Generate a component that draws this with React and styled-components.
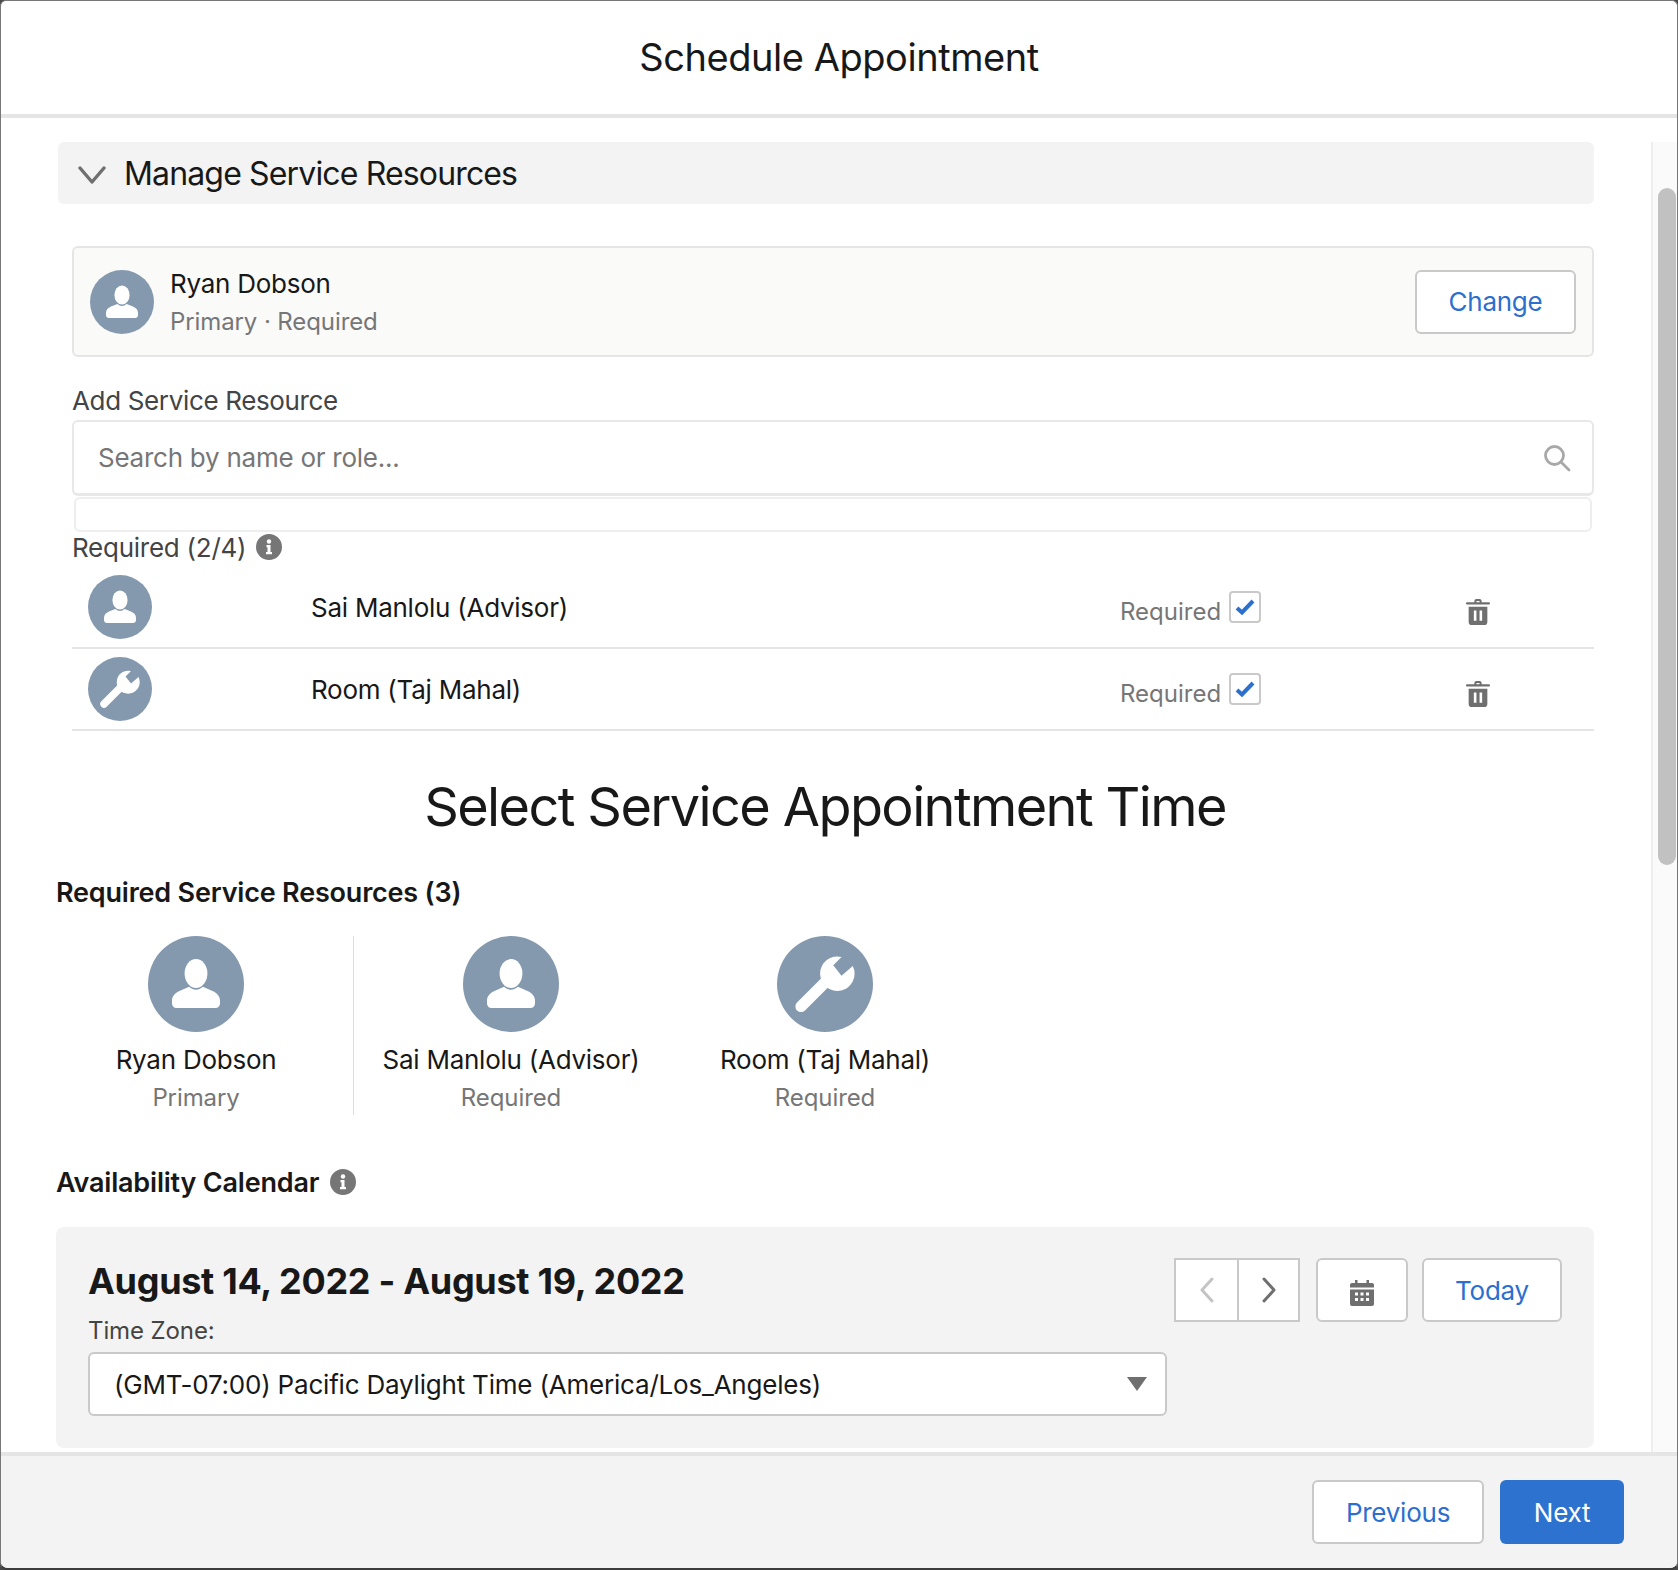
import React from 'react';
import styled, { createGlobalStyle } from 'styled-components';

const GlobalStyle = createGlobalStyle`
  html, body {
    margin: 0;
    padding: 0;
    background: #4a4a4a;
  }
  * {
    box-sizing: border-box;
  }
`;

const Window = styled.div`
  display: flex;
  flex-direction: column;
  height: 1570px;
  overflow: hidden;
  background: #fff;
  border: 1px solid #777;
  border-bottom: 2px solid #3c3c3c;
  border-radius: 6px 6px 8px 8px;
  font-family: Inter, "Liberation Sans", sans-serif;
  color: #181818;
`;

const Header = styled.header`
  flex: none;
  height: 117px;
  padding-bottom: 2px;
  display: flex;
  align-items: center;
  justify-content: center;
  border-bottom: 4px solid #e5e5e5;
  font-size: 38px;
  letter-spacing: -0.45px;
`;

const Body = styled.div`
  flex: 1;
  min-height: 0;
  display: flex;
  padding-top: 24px;
`;

const Content = styled.main`
  flex: none;
  width: 1650px;
  padding: 0 57px 0 55px;
  overflow: hidden;
`;

const Track = styled.div`
  flex: 1;
  position: relative;
  background: #fafafa;
  border-left: 2px solid #eeeeee;
`;

const Thumb = styled.div`
  position: absolute;
  top: 46px;
  left: 5px;
  width: 18px;
  height: 677px;
  border-radius: 9px;
  background: #c1c1c1;
`;

const SectionBar = styled.div`
  height: 62px;
  margin-left: 2px;
  padding-left: 20px;
  display: flex;
  align-items: center;
  gap: 18px;
  background: #f3f3f3;
  border-radius: 6px;
  font-size: 32px;
  letter-spacing: -0.85px;
`;

const ChevronSlot = styled.span`
  display: flex;
  padding-top: 3px;
`;

const Indent = styled.div`
  margin-left: 16px;
`;

const PrimaryCard = styled.div`
  height: 111px;
  margin-top: 42px;
  padding: 0 16px 0 16px;
  display: flex;
  align-items: center;
  gap: 16px;
  background: #fafaf9;
  border: 2px solid #e5e5e5;
  border-radius: 6px;
`;

const PrimaryText = styled.div`
  flex: 1;
  padding-top: 2px;
`;

const Name = styled.div`
  font-size: 26px;
  line-height: 34px;
  letter-spacing: -0.25px;
`;

const Sub = styled.div`
  margin-top: 4px;
  font-size: 24px;
  line-height: 34px;
  letter-spacing: -0.1px;
  color: #767676;
`;

const Avatar = styled.span`
  flex: none;
  width: ${p => p.$size}px;
  height: ${p => p.$size}px;
  border-radius: 50%;
  background: #8599ae;
  display: flex;
  align-items: center;
  justify-content: center;
  color: #fff;
`;

const Button = styled.button`
  flex: none;
  width: ${p => p.$width}px;
  height: ${p => p.$height || 64}px;
  padding: 0;
  display: flex;
  align-items: center;
  justify-content: center;
  background: ${p => (p.$primary ? '#2d72cf' : '#fff')};
  border: ${p => (p.$primary ? 'none' : '2px solid #c9c9c9')};
  border-radius: 6px;
  font-family: inherit;
  font-size: 26px;
  letter-spacing: -0.25px;
  color: ${p => (p.$primary ? '#fff' : '#2b6fcf')};
`;

const FieldLabel = styled.div`
  margin-top: 29px;
  font-size: 26px;
  line-height: 30px;
  letter-spacing: -0.35px;
  color: #444;
`;

const SearchBox = styled.div`
  height: 76px;
  margin-top: 4px;
  padding: 0 21px 0 24px;
  display: flex;
  align-items: center;
  justify-content: space-between;
  background: #fff;
  border: 2px solid #e8e8e8;
  border-bottom-width: 3px;
  border-radius: 6px;
  font-size: 26px;
  letter-spacing: -0.25px;
  color: #767676;
`;

const EmptyList = styled.div`
  height: 35px;
  margin: 1px 2px 0;
  border: 2px solid #eeeeee;
  border-radius: 6px;
`;

const RequiredLabel = styled(FieldLabel)`
  margin: 1px 0 4px;
  display: flex;
  align-items: center;
  gap: 10px;
  letter-spacing: -0.25px;
`;

const InfoSlot = styled.span`
  display: flex;
  margin-top: -2px;
`;

const ResourceRow = styled.div`
  height: 82px;
  padding-left: 16px;
  display: grid;
  grid-template-columns: 223px 809px 346px 1fr;
  align-items: center;
  border-bottom: 2px solid #e5e5e5;
`;

const RowName = styled(Name)`
  padding-top: 1px;
`;

const RequiredCell = styled.div`
  display: flex;
  align-items: center;
  gap: 8px;
`;

const RequiredText = styled.span`
  padding-top: 9px;
  font-size: 24px;
  letter-spacing: 0;
  color: #767676;
`;

const Checkbox = styled.span`
  width: 32px;
  height: 32px;
  display: flex;
  align-items: center;
  justify-content: center;
  background: #fff;
  border: 2px solid #c9c9c9;
  border-radius: 4px;
`;

const TrashCell = styled.div`
  display: flex;
  padding-top: 8px;
`;

const BigHeading = styled.h1`
  margin: 43px 0 0;
  font-size: 54px;
  font-weight: 400;
  line-height: 66px;
  letter-spacing: -1.6px;
  text-align: center;
`;

const SectionTitle = styled.h2`
  margin: ${p => p.$top}px 0 0;
  display: flex;
  align-items: center;
  gap: 11px;
  font-size: 27px;
  font-weight: 600;
  line-height: 34px;
  letter-spacing: -0.2px;
`;

const TileRow = styled.div`
  margin-top: 26px;
  display: flex;
`;

const Tile = styled.div`
  width: 280px;
  display: flex;
  flex-direction: column;
  align-items: center;
  & + & {
    margin-left: 34px;
  }
`;

const TileName = styled(Name)`
  margin-top: 11px;
`;

const TileDivider = styled.div`
  width: 1px;
  margin: 0 17px;
  background: #dddddd;
`;

const CalendarPanel = styled.section`
  height: 221px;
  margin-top: 27px;
  padding: 32px;
  display: flex;
  justify-content: space-between;
  background: #f3f3f3;
  border-radius: 8px;
`;

const PanelLeft = styled.div`
  width: 1080px;
`;

const DateRange = styled.div`
  font-size: 36px;
  font-weight: 700;
  line-height: 44px;
  letter-spacing: -0.3px;
`;

const ZoneLabel = styled.div`
  margin-top: 13px;
  font-size: 24px;
  line-height: 30px;
  letter-spacing: -0.1px;
  color: #444;
`;

const ZoneSelect = styled.div`
  height: 64px;
  margin-top: 6px;
  padding: 0 18px 0 24px;
  display: flex;
  align-items: center;
  justify-content: space-between;
  background: #fff;
  border: 2px solid #c9c9c9;
  border-radius: 6px;
  font-size: 26px;
  letter-spacing: -0.2px;
`;

const Caret = styled.span`
  width: 0;
  height: 0;
  border-left: 10px solid transparent;
  border-right: 10px solid transparent;
  border-top: 14px solid #6f6f6f;
`;

const PanelTools = styled.div`
  margin: -1px 0 0 7px;
  display: flex;
  align-items: flex-start;
  gap: 14px;
`;

const Pager = styled.div`
  display: flex;
  margin-right: 2px;
  border: 2px solid #c9c9c9;
  background: #fff;
`;

const PagerButton = styled.span`
  width: 61px;
  height: 60px;
  display: flex;
  align-items: center;
  justify-content: center;
  & + & {
    border-left: 2px solid #c9c9c9;
  }
`;

const CalendarSlot = styled.span`
  display: flex;
  padding-top: 5px;
`;

const Footer = styled.footer`
  flex: none;
  height: 116px;
  padding: 24px 53px 0 0;
  display: flex;
  justify-content: flex-end;
  gap: 16px;
  background: #f3f3f3;
  border-top: 4px solid #e5e5e5;
`;

const PersonIcon = ({ size }) => (
  <svg width={size} height={size} viewBox="0 0 64 64" fill="#fff">
    <ellipse cx="32" cy="25" rx="7.6" ry="9.6" />
    <path d="M16 45v-2c0-3 2-5 5-6.4l6.4-2.7c1.5 1.3 3 2 4.600 2s3.100-.7 4.600-2l6.400 2.700c3 1.400 5 3.400 5 6.400v2c0 1.700-1.300 3-3 3H19c-1.700 0-3-1.300-3-3z" />
  </svg>
);

const WrenchIcon = ({ size }) => (
  <svg width={size} height={size} viewBox="0 0 64 64">
    <path d="M43 14l-5.500 5.500L43 26.500l7.500-6.500A11.500 11.500 0 1 1 43 14z" fill="#fff" />
    <path d="M16 47l18-18" stroke="#fff" strokeWidth="7.500" strokeLinecap="round" />
  </svg>
);

const PersonAvatar = ({ size }) => (
  <Avatar $size={size}><PersonIcon size={size} /></Avatar>
);

const WrenchAvatar = ({ size }) => (
  <Avatar $size={size}><WrenchIcon size={size} /></Avatar>
);

const InfoIcon = () => (
  <svg width="26" height="26" viewBox="0 0 26 26">
    <circle cx="13" cy="13" r="13" fill="#767676" />
    <circle cx="13" cy="7.500" r="2.200" fill="#fff" />
    <path d="M10.500 11h4v7h1.500v2.200H10v-2.200h1.500v-4.800h-1z" fill="#fff" />
  </svg>
);

const SectionChevron = () => (
  <svg width="28" height="18" viewBox="0 0 28 18" fill="none" stroke="#6f6f6f" strokeWidth="3.400" strokeLinecap="round" strokeLinejoin="round">
    <path d="M2 2l12 14L26 2" />
  </svg>
);

const SearchIcon = () => (
  <svg width="28" height="28" viewBox="0 0 28 28" fill="none" stroke="#a8a8a8" strokeWidth="2.800" strokeLinecap="round">
    <circle cx="11.500" cy="11.500" r="9" />
    <path d="M18 18l8 8" />
  </svg>
);

const CheckIcon = () => (
  <svg width="20" height="16" viewBox="0 0 20 16" fill="none" stroke="#2b6fcf" strokeWidth="4">
    <path d="M2 9l5 4.500L18 2" />
  </svg>
);

const TrashIcon = () => (
  <svg width="24" height="27" viewBox="0 0 23 26" fill="#6f6f6f">
    <path d="M8 4V3a2 2 0 0 1 2-2h3a2 2 0 0 1 2 2v1h7a1 1 0 0 1 0 2.200H1A1 1 0 0 1 1 4zm2 0h3V3h-3z" />
    <path d="M2.500 8.500h18V23a3 3 0 0 1-3 3h-12a3 3 0 0 1-3-3zM7.500 12v10h2.500V12zm5.500 0v10h2.500V12z" fillRule="evenodd" />
  </svg>
);

const PagerChevron = ({ dir, color }) => (
  <svg width="16" height="26" viewBox="0 0 16 26" fill="none" stroke={color} strokeWidth="3" strokeLinecap="round" strokeLinejoin="round">
    <path d={dir === 'left' ? 'M13 2L3 13l10 11' : 'M3 2l10 11L3 24'} />
  </svg>
);

const CalendarIcon = () => (
  <svg width="24" height="26" viewBox="0 0 24 26" fill="#6f6f6f">
    <path d="M5 0h2.500v3H16.500V0H19v3h3a2 2 0 0 1 2 2v2.500H0V5a2 2 0 0 1 2-2h3z" />
    <path fillRule="evenodd" d="M0 9.500h24V24a2 2 0 0 1-2 2H2a2 2 0 0 1-2-2zM5 12.500v3h3v-3zm5.500 0v3h3v-3zm5.500 0v3h3v-3zM5 18v3h3v-3zm5.500 0v3h3v-3zm5.500 0v3h3v-3z" />
  </svg>
);

const resources = [
  { name: 'Sai Manlolu (Advisor)', avatar: PersonAvatar },
  { name: 'Room (Taj Mahal)', avatar: WrenchAvatar },
];

const App = () => {
  return (
    <Window>
      <GlobalStyle />
      <Header>Schedule Appointment</Header>
      <Body>
        <Content>
          <SectionBar>
            <ChevronSlot><SectionChevron /></ChevronSlot>
            Manage Service Resources
          </SectionBar>
          <Indent>
            <PrimaryCard>
              <PersonAvatar size={64} />
              <PrimaryText>
                <Name>Ryan Dobson</Name>
                <Sub>Primary · Required</Sub>
              </PrimaryText>
              <Button $width={161} $height={64}>Change</Button>
            </PrimaryCard>
            <FieldLabel>Add Service Resource</FieldLabel>
            <SearchBox>
              Search by name or role...
              <SearchIcon />
            </SearchBox>
            <EmptyList />
            <RequiredLabel>Required (2/4) <InfoSlot><InfoIcon /></InfoSlot></RequiredLabel>
            {resources.map(({ name, avatar: RowAvatar }) => (
              <ResourceRow key={name}>
                <RowAvatar size={64} />
                <RowName>{name}</RowName>
                <RequiredCell>
                  <RequiredText>Required</RequiredText>
                  <Checkbox><CheckIcon /></Checkbox>
                </RequiredCell>
                <TrashCell><TrashIcon /></TrashCell>
              </ResourceRow>
            ))}
          </Indent>
          <BigHeading>Select Service Appointment Time</BigHeading>
          <SectionTitle $top={36}>Required Service Resources (3)</SectionTitle>
          <TileRow>
            <Tile>
              <PersonAvatar size={96} />
              <TileName>Ryan Dobson</TileName>
              <Sub>Primary</Sub>
            </Tile>
            <TileDivider />
            <Tile>
              <PersonAvatar size={96} />
              <TileName>Sai Manlolu (Advisor)</TileName>
              <Sub>Required</Sub>
            </Tile>
            <Tile>
              <WrenchAvatar size={96} />
              <TileName>Room (Taj Mahal)</TileName>
              <Sub>Required</Sub>
            </Tile>
          </TileRow>
          <SectionTitle $top={51}>Availability Calendar <InfoSlot><InfoIcon /></InfoSlot></SectionTitle>
          <CalendarPanel>
            <PanelLeft>
              <DateRange>August 14, 2022 - August 19, 2022</DateRange>
              <ZoneLabel>Time Zone:</ZoneLabel>
              <ZoneSelect>
                (GMT-07:00) Pacific Daylight Time (America/Los_Angeles)
                <Caret />
              </ZoneSelect>
            </PanelLeft>
            <PanelTools>
              <Pager>
                <PagerButton><PagerChevron dir="left" color="#c4c4c4" /></PagerButton>
                <PagerButton><PagerChevron dir="right" color="#6f6f6f" /></PagerButton>
              </Pager>
              <Button $width={92}><CalendarSlot><CalendarIcon /></CalendarSlot></Button>
              <Button $width={140}>Today</Button>
            </PanelTools>
          </CalendarPanel>
        </Content>
        <Track><Thumb /></Track>
      </Body>
      <Footer>
        <Button $width={172} $height={64}>Previous</Button>
        <Button $width={124} $height={64} $primary>Next</Button>
      </Footer>
    </Window>
  );
};

export default App;
